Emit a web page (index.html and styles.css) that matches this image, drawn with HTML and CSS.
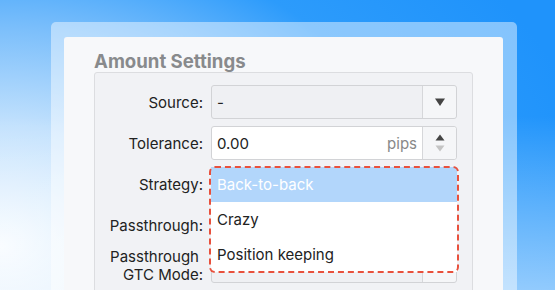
FILE: index.html
```html
<!DOCTYPE html>
<html>
<head>
<meta charset="utf-8">
<link rel="stylesheet" href="styles.css">
</head>
<body>
<div class="stage">
  <div class="frame">
    <div class="card">
      <div class="title">Amount Settings</div>
      <div class="fieldset">
        <div class="label">Source:</div>
        <div class="field select disabled">
          <span class="value">-</span>
          <span class="btn"><svg width="12" height="10" viewBox="0 0 12 10"><path d="M1 1.5h10L6 9z" fill="#444"/></svg></span>
        </div>

        <div class="label">Tolerance:</div>
        <div class="field input">
          <span class="value">0.00</span>
          <span class="unit">pips</span>
          <span class="btn spin">
            <svg width="10" height="7" viewBox="0 0 10 7"><path d="M5 0.5L9.5 6.5H0.5z" fill="#444"/></svg>
            <svg width="10" height="7" viewBox="0 0 10 7"><path d="M0.5 0.5h9L5 6.5z" fill="#c4c4c4"/></svg>
          </span>
        </div>

        <div class="label">Strategy:</div>
        <div class="field select anchor">
          <span class="value">Back-to-back</span>
          <span class="btn"></span>
          <div class="menu">
            <div class="opt active">Back-to-back</div>
            <div class="opt">Crazy</div>
            <div class="opt">Position keeping</div>
          </div>
        </div>

        <div class="label">Passthrough:</div>
        <div class="field select disabled">
          <span class="value"></span>
          <span class="btn"></span>
        </div>

        <div class="label two"><span class="l1">Passthrough</span><br>GTC Mode:</div>
        <div class="field select disabled">
          <span class="value"></span>
          <span class="btn"></span>
        </div>
      </div>
    </div>
  </div>
</div>
</body>
</html>
```

FILE: styles.css
```css
html, body {
  margin: 0;
  padding: 0;
  width: 555px;
  height: 290px;
  overflow: hidden;
}
body {
  font-family: Inter, "Noto Sans", sans-serif;
}
.stage {
  width: 555px;
  height: 290px;
  box-sizing: border-box;
  padding: 22px 38px 0 51px;
  background:
    linear-gradient(to bottom, rgba(255,255,255,0) 40%, rgba(255,255,255,0.5) 100%),
    radial-gradient(ellipse 110% 150% at 0% 85%, #f6fbff 0%, #c2e1fd 28%, #7cbffb 50%, #2c9bfb 72%, #1f93fb 100%);
}
.frame {
  height: 100%;
  box-sizing: border-box;
  padding: 15px 14px 0 13px;
  background: rgba(255,255,255,0.45);
  border-radius: 5px 5px 0 0;
}
.card {
  height: 100%;
  box-sizing: border-box;
  padding: 13px 30px 0 30px;
  background: #f7f8fa;
  border-radius: 3px 3px 0 0;
}
.title {
  font-size: 18.6px;
  line-height: 22px;
  font-weight: 700;
  color: #888a8c;
}
.fieldset {
  border: 1px solid #dcdde0;
  border-radius: 3px;
  background: #f1f2f5;
  padding: 12px 15px 20px 0;
  display: grid;
  grid-template-columns: 108px 246px;
  column-gap: 8px;
  row-gap: 7px;
  grid-auto-rows: 34px;
}
.label {
  font-size: 15px;
  color: #222;
  text-align: right;
  display: flex;
  align-items: center;
  justify-content: flex-end;
}
.label.two {
  display: block;
  line-height: 18px;
  align-self: center;
}
.label.two .l1 {
  margin-right: 4px;
}
.field {
  position: relative;
  display: flex;
  align-items: center;
  box-sizing: border-box;
  border: 1px solid #d2d3d6;
  border-radius: 3px;
  background: #fff;
  font-size: 15px;
  color: #222;
}
.field.disabled {
  background: #eff0f3;
}
.value {
  flex: 1;
  padding-left: 5px;
}
.unit {
  color: #888;
  padding-right: 5px;
}
.btn {
  width: 33px;
  height: 100%;
  border-left: 1px solid #d6d7da;
  background: #f5f6f8;
  border-radius: 0 3px 3px 0;
  display: flex;
  align-items: center;
  justify-content: center;
}
.spin {
  flex-direction: column;
  gap: 4px;
}
.menu {
  position: absolute;
  left: -1px;
  top: -1px;
  width: 246px;
  background: #fff;
  z-index: 2;
}
.menu::after {
  content: "";
  position: absolute;
  left: -2px;
  right: -2px;
  top: -1px;
  bottom: -1px;
  border: 2px dashed #e8503c;
  border-radius: 6px;
}
.opt {
  height: 35px;
  line-height: 35px;
  padding-left: 6px;
  font-size: 15px;
  color: #222;
}
.opt.active {
  background: #b2d6fb;
  color: #fff;
}
```
